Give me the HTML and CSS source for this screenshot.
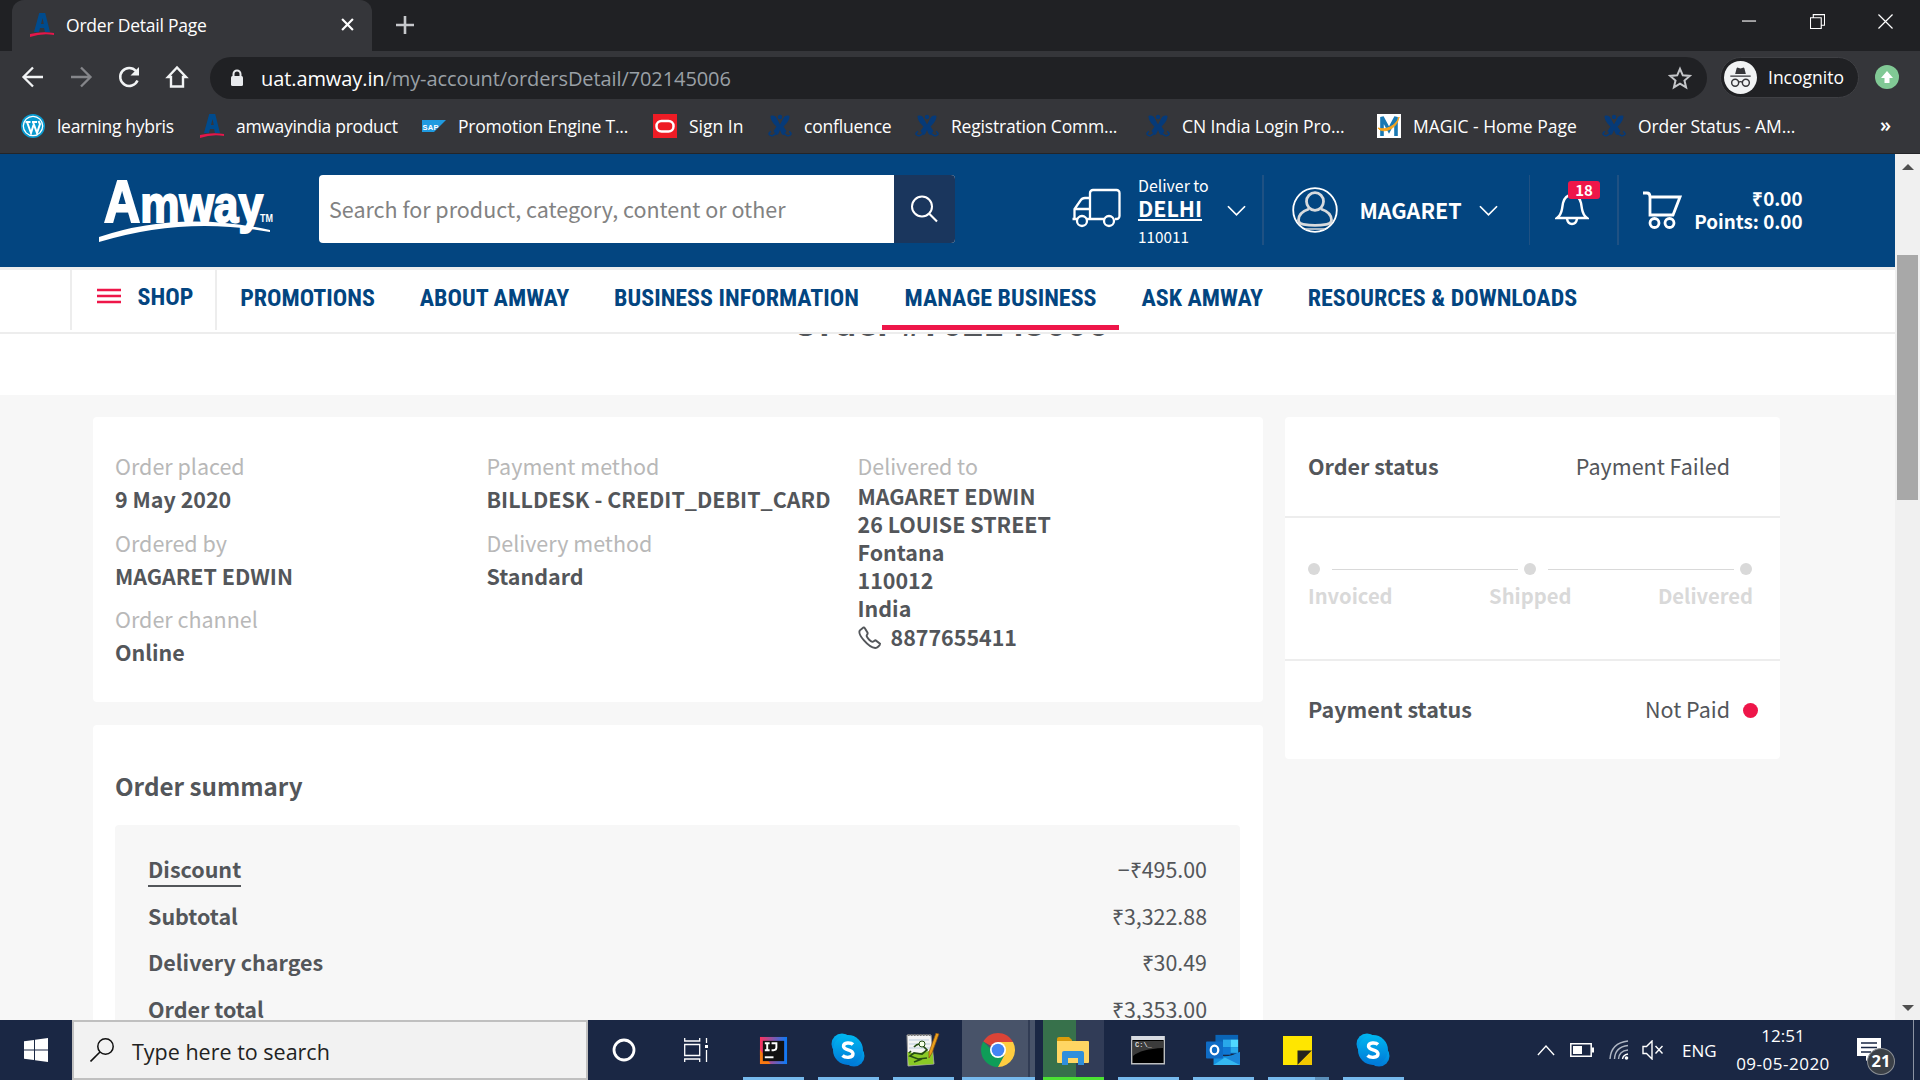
FILE: index.html
```html
<!DOCTYPE html>
<html lang="en">
<head>
<meta charset="utf-8">
<title>Order Detail Page</title>
<link rel="stylesheet" href="styles.css">
</head>
<body>
<svg class="defs" width="0" height="0">
  <symbol id="amway-a" viewBox="0 0 24 24"><path fill="#004b8d" fill-rule="evenodd" d="M4 19 9.2 0h6L20 19h-5l-1-4h-4l-1 4zM11 11h2.800l-1.300-6z"/><path fill="#e4174b" d="M0 21q12-3 24-1v2Q12 20 0 24z"/></symbol>
  <symbol id="conf" viewBox="0 0 24 24"><path fill="#063a78" d="M2.500 2c3-1 5 0 6 2l3.500 6.500L15.500 4c1-2 3-3 6-2 0 4-3 8-6 10.500l3 4.500-3 4c-2 0-2.500-3-3.500-5-1 2-1.500 5-3.500 5l-3-4 3-4.500C5.500 10 2.500 6 2.500 2z"/><path d="M3 17.500c-4 2-1 5 2 4l3-2M21 17.500c4 2 1 5-2 4l-3-2" fill="none" stroke="#063a78" stroke-width="1.600"/><circle cx="12" cy="3" r="2.200" fill="#063a78"/></symbol>
  <symbol id="chev" viewBox="0 0 20 14"><path d="m1 2 9 9 9-9" fill="none" stroke="currentColor" stroke-width="1.800"/></symbol>
  <linearGradient id="sky" x2="0" y2="1"><stop stop-color="#00b7f0"/><stop offset="1" stop-color="#0078d7"/></linearGradient>
  <symbol id="skype" viewBox="0 0 34 34"><g fill="url(#sky)"><circle cx="11" cy="11" r="10.500"/><circle cx="23" cy="23" r="10.500"/><circle cx="17" cy="17" r="15"/></g><path d="M22 11.500C20 9.500 12.500 9 12.500 13.300c0 4.300 9.500 2.700 9.500 7.500 0 4.600-8 4.200-10.500 1.700" fill="none" stroke="#fff" stroke-width="3.400"/></symbol>
</svg>

<header class="browser">
  <div class="tabstrip">
    <div class="tab"><svg class="ic24"><use href="#amway-a"/></svg><span>Order Detail Page</span>
      <svg class="tab-x" viewBox="0 0 12 12"><path d="m1 1 10 10M11 1 1 11" stroke="#fff" stroke-width="2"/></svg></div>
    <svg class="plus" viewBox="0 0 18 18"><path d="M9 0v18M0 9h18" stroke="#c6c8cb" stroke-width="2.600"/></svg>
    <div class="winbtns">
      <svg viewBox="0 0 16 16"><path d="M0 7.500h15" stroke="#fff" stroke-width="1.200"/></svg>
      <svg viewBox="0 0 16 16"><path d="M.5 4h11.500v11.500H.5zM3.500 4V.6h12V12H12" fill="none" stroke="#fff" stroke-width="1.200"/></svg>
      <svg viewBox="0 0 16 16"><path d="m.5.5 15 15m0-15-15 15" stroke="#fff" stroke-width="1.300"/></svg>
    </div>
  </div>
  <div class="toolbar">
    <svg class="nav-ic" viewBox="0 0 24 24"><path d="M22 12H3m9-9.500L2.500 12l9.500 9.500" fill="none" stroke="#f1f3f4" stroke-width="2.300"/></svg>
    <svg class="nav-ic" viewBox="0 0 24 24"><path d="M2 12h19m-9-9.500 9.500 9.500-9.500 9.500" fill="none" stroke="#85868a" stroke-width="2.300"/></svg>
    <svg class="nav-ic" viewBox="0 0 24 24"><path d="M20.500 15.500A9 9 0 1 1 19 6" fill="none" stroke="#f1f3f4" stroke-width="2.500"/><path d="M22 2v8.500h-8.500z" fill="#f1f3f4"/></svg>
    <svg class="nav-ic" viewBox="0 0 24 24"><path d="M6 21.500V12H3l9-9.500 9 9.500h-3v9.500z" fill="none" stroke="#f1f3f4" stroke-width="2.400"/></svg>
    <div class="omnibox">
      <svg class="lock" viewBox="0 0 14 18"><path d="M3.500 8V5a3.500 3.500 0 0 1 7 0v3" fill="none" stroke="#e8eaed" stroke-width="2"/><rect x="1" y="7" width="12" height="10" rx="1.500" fill="#e8eaed"/></svg>
      <span class="url"><b>uat.amway.in</b>/my-account/ordersDetail/702145006</span>
      <svg class="star" viewBox="0 0 24 24"><path d="m12 2.800 2.800 6.500 7 .6-5.300 4.600 1.600 6.900-6.100-3.700-6.100 3.700 1.600-6.900L2.200 9.900l7-.6z" fill="none" stroke="#c4c6c9" stroke-width="2"/></svg>
    </div>
    <div class="incog">
      <svg viewBox="0 0 34 34"><circle cx="17" cy="17" r="17" fill="#f1f3f4"/><path d="M11.500 13.500 13 7.500q.5-1 1.500-.6l2.500.7 2.500-.7q1-.3 1.500.6l1.500 6z" fill="#35363a"/><path d="M6.500 15.600h21M14.500 22q2.500-1.500 5 0" stroke="#35363a" stroke-width="1.500" fill="none"/><g fill="none" stroke="#35363a" stroke-width="1.500"><circle cx="11.500" cy="22.500" r="3.600"/><circle cx="22.500" cy="22.500" r="3.600"/></g></svg>
      <span>Incognito</span>
    </div>
    <svg class="upd" viewBox="0 0 24 24"><circle cx="12" cy="12" r="12" fill="#81c995"/><path d="m12 6 6 7h-3.500v5h-5v-5H6z" fill="#fff"/></svg>
  </div>
  <div class="bookmarks">
    <div class="bm b1"><svg class="ic24" viewBox="0 0 24 24"><circle cx="12" cy="12" r="12" fill="#0a9bd0"/><circle cx="12" cy="12" r="9.700" fill="none" stroke="#fff" stroke-width="1.300"/><path d="M4.500 8h5M6 8l4 11 2.500-8M11 8h5m-4 0 4 11 3-9-1.500-3" fill="none" stroke="#fff" stroke-width="2"/></svg><span>learning hybris</span></div>
    <div class="bm b2"><svg class="ic24"><use href="#amway-a"/></svg><span>amwayindia product</span></div>
    <div class="bm b3"><svg class="ic24" viewBox="0 0 24 24"><path d="M0 6h24L12 18H0z" fill="#1f9ae0"/><text x=".5" y="15.500" class="sap" textLength="16">SAP</text></svg><span>Promotion Engine T...</span></div>
    <div class="bm b4"><svg class="ic24" viewBox="0 0 24 24"><path d="M0 0h24v24H0z" fill="#ee1c25"/><rect x="3.500" y="7" width="17" height="10.500" rx="5" fill="none" stroke="#fff" stroke-width="2.500"/></svg><span>Sign In</span></div>
    <div class="bm b5"><svg class="ic24"><use href="#conf"/></svg><span>confluence</span></div>
    <div class="bm b6"><svg class="ic24"><use href="#conf"/></svg><span>Registration Comm...</span></div>
    <div class="bm b7"><svg class="ic24"><use href="#conf"/></svg><span>CN India Login Pro...</span></div>
    <div class="bm b8"><svg class="ic24" viewBox="0 0 24 24"><path d="M0 0h24v24H0z" fill="#fff"/><path d="M5 22V3l7 13 7-13v19" fill="none" stroke="#1a79b3" stroke-width="3.600"/><path d="M1 14c4 6 19 2 21-11-2 8-13 14-21 11z" fill="#f9a51b" stroke="#f9a51b"/></svg><span>MAGIC - Home Page</span></div>
    <div class="bm b9"><svg class="ic24"><use href="#conf"/></svg><span>Order Status - AM...</span></div>
    <span class="more">»</span>
  </div>
</header>

<div class="viewport">
  <div class="page">
    <div class="masthead">
      <svg class="logo" viewBox="0 0 176 66"><g fill="#fff"><text class="logo-t" x="5" y="45" textLength="159" lengthAdjust="spacingAndGlyphs"><tspan class="logo-a">A</tspan>mway</text><text class="logo-tm" x="161" y="45" textLength="13" lengthAdjust="spacingAndGlyphs">TM</text><path d="M0 60Q80 33 171 53v2Q85 39 0 65z"/></g></svg>
      <div class="search"><span>Search for product, category, content or other</span>
        <i><svg viewBox="0 0 28 28"><circle cx="12" cy="11.500" r="10" fill="none" stroke="#fff" stroke-width="2"/><path d="m19 18.500 8 8" stroke="#fff" stroke-width="2.200"/></svg></i></div>
      <svg class="truck" viewBox="0 0 50 40"><g fill="none" stroke="#fff" stroke-width="2.300"><path d="M7 31H1.500M15 31h18m11 0h1.500a3 3 0 0 0 3-3V5a3 3 0 0 0-3-3H22a3 3 0 0 0-3 3v26M3.500 31V21l6-8.500q1.500-2.500 4.500-2.500h5M4 21h15"/><circle cx="11" cy="33" r="5"/><circle cx="38" cy="33" r="5"/></g></svg>
      <div class="deliver"><span>Deliver to</span><b>DELHI</b><small>110011</small></div>
      <svg class="chev"><use href="#chev"/></svg>
      <i class="rule r1"></i>
      <svg class="avatar" viewBox="0 0 46 46"><circle cx="23" cy="23" r="21.800" fill="none" stroke="#fff" stroke-width="1.800"/><g fill="none" stroke="#d8dadd" stroke-width="2.800"><ellipse cx="23" cy="14.500" rx="8.500" ry="8.800"/><path d="M17 22c-6 2-10.500 6-10.500 11 0 3 3 4 5 4.300 7 1.200 16 1.200 23 0 2-.3 5-1.300 5-4.300 0-5-4.500-9-10.500-11"/><path d="M13 42h20" stroke-width="1.500"/></g></svg>
      <b class="user">MAGARET</b>
      <svg class="chev c2"><use href="#chev"/></svg>
      <i class="rule r2"></i>
      <div class="bell"><svg viewBox="0 0 34 34"><path d="M2 26h30q-4-3-5-9l-1-6q-2-8-9-8t-9 8l-1 6q-1 6-5 9zM12 27q1 5 5 5t5-5" fill="none" stroke="#fff" stroke-width="2.400"/></svg><em>18</em></div>
      <i class="rule r3"></i>
      <svg class="cart" viewBox="0 0 40 38"><g fill="none" stroke="#fff" stroke-width="2.800"><path d="M1 2h4q3 0 3 4v18h23l7-18H8"/><circle cx="12.500" cy="32" r="4.500"/><circle cx="27.500" cy="32" r="4.500"/></g></svg>
      <div class="points"><b>₹0.00</b><b>Points: 0.00</b></div>
    </div>
    <nav class="menu">
      <a class="shop"><svg viewBox="0 0 24 18"><path d="M0 3h24M0 9h24M0 15h24" stroke="#ee1649" stroke-width="2.400"/></svg><span>SHOP</span></a>
      <a class="m1"><span>PROMOTIONS</span></a><a class="m2"><span>ABOUT AMWAY</span></a><a class="m3"><span>BUSINESS INFORMATION</span></a><a class="m4 on"><span>MANAGE BUSINESS</span></a><a class="m5"><span>ASK AMWAY</span></a><a class="m6"><span>RESOURCES &amp; DOWNLOADS</span></a>
    </nav>
    <div class="title"><h1>Order #702145006</h1></div>
    <main class="content">
      <div class="main-col">
        <section class="card details">
          <dl><dt>Order placed</dt><dd>9 May 2020</dd><dt>Ordered by</dt><dd>MAGARET EDWIN</dd><dt>Order channel</dt><dd>Online</dd></dl>
          <dl><dt>Payment method</dt><dd>BILLDESK - CREDIT_DEBIT_CARD</dd><dt>Delivery method</dt><dd>Standard</dd></dl>
          <div class="addr"><p class="lbl">Delivered to</p><p>MAGARET EDWIN</p><p>26 LOUISE STREET</p><p>Fontana</p><p>110012</p><p>India</p>
            <p class="tel"><svg viewBox="0 0 24 24"><path d="M5 1.500 2 4c-3 4 9 18 16 18.500 2 .2 5-3 5-4.500l-4.500-3.500c-1-.6-2 1.500-3.500 1.500-2-.5-5.500-4-6-6 0-1.500 1.500-2 1-3.500L7 1.500c-.5-1-1.500-.6-2 0z" fill="none" stroke="#53565a" stroke-width="2"/></svg>8877655411</p></div>
        </section>
        <section class="card summary">
          <h2>Order summary</h2>
          <div class="totals">
            <div><b class="u">Discount</b><span>−₹495.00</span></div>
            <div><b>Subtotal</b><span>₹3,322.88</span></div>
            <div><b>Delivery charges</b><span>₹30.49</span></div>
            <div><b>Order total</b><span>₹3,353.00</span></div>
          </div>
        </section>
      </div>
      <aside class="card status">
        <div class="row"><b>Order status</b><span>Payment Failed</span></div>
        <div class="steps">
          <div class="track"><i></i><hr><i></i><hr><i></i></div>
          <div class="names"><b>Invoiced</b><b>Shipped</b><b>Delivered</b></div>
        </div>
        <div class="row pay"><b>Payment status</b><span>Not Paid</span><i></i></div>
      </aside>
    </main>
  </div>
  <div class="scroll"><i class="up"></i><i class="thumb"></i><i class="down"></i></div>
</div>

<footer class="taskbar">
  <div class="start"><svg viewBox="0 0 24 24"><path fill="#fff" d="M0 3.300 10 2v9.500H0zM11 1.800 24 0v11.500H11zM0 12.500h10V22L0 20.700zm11 0h13V24l-13-1.800z"/></svg></div>
  <div class="tsearch"><svg viewBox="0 0 24 24"><circle cx="15.500" cy="8.500" r="7.700" fill="none" stroke="#111" stroke-width="1.500"/><path d="M10 14 .5 23.500" stroke="#111" stroke-width="1.600"/></svg><span>Type here to search</span></div>
  <div class="slot s1"><svg viewBox="0 0 24 24"><circle cx="12" cy="12" r="10" fill="none" stroke="#fff" stroke-width="2.800"/></svg></div>
  <div class="slot s2"><svg viewBox="0 0 24 24"><g fill="none" stroke="#fff" stroke-width="1.300"><path d="M.7 6.500h15v11H.7zM.7 0v3h15V0M.7 24v-3h15v3M22.500 0v5M22.500 12v12"/></g><path d="M21 7h3v3h-3z" fill="#fff"/></svg></div>
  <div class="slot app s3"><svg viewBox="0 0 30 30"><linearGradient id="ij"><stop stop-color="#fe315d"/><stop offset="1" stop-color="#087cfa"/></linearGradient><path d="M1 1h28v28H1z" fill="url(#ij)"/><path d="M1 14v15h11z" fill="#f97a12"/><path d="M4 5h22v21H4z" fill="#111"/><path d="M6 7.500h5M8.500 7.500v7M6 14.700h5M13 7.500h5v4.500q0 2.700-3 2.700h-2" fill="none" stroke="#fff" stroke-width="2"/><path d="M6 21h9v2H6z" fill="#fff"/></svg></div>
  <div class="slot app s4"><svg class="big"><use href="#skype"/></svg></div>
  <div class="slot app s5"><svg class="big" viewBox="0 0 34 34"><path d="M1 2h24l3 29-26 2z" fill="#f4f4f4" stroke="#999"/><path d="M1.500 19q10 3 25-2l1 14-25 1.500z" fill="#8ac926"/><path d="M3 7h20M3 11h21M3 15h21" stroke="#bcd" /><path d="M2 2h23" stroke="#777" stroke-width="2" stroke-dasharray="1.500 1.500"/><path d="M8 14q5-5 9-1l4 4-5 4-8-1-4 3 8 3 9-1M5 18l-2 2M16 26l-8 3" fill="none" stroke="#254d13" stroke-width="1.700"/><circle cx="16" cy="11" r="3" fill="#f5ffe8" stroke="#254d13"/><path d="m33 1-7 19-3 5 0-6 7-19z" fill="#e9a01b" stroke="#884d15" stroke-width=".7"/></svg></div>
  <div class="slot app s6"><svg class="big" viewBox="0 0 34 34"><path d="M17 17 2.300 8.500a17 17 0 0 1 29.400 0z" fill="#db4437"/><path d="M17 17h-6l-8.700-8.500A17 17 0 0 0 17 34l6-11z" fill="#0f9d58"/><path d="M17 17V9h15a17 17 0 0 1-15 25l6.500-12z" fill="#ffcd40"/><path d="M17 9h15l-.3-.5H8z" fill="#db4437"/><circle cx="17" cy="17" r="8" fill="#fff"/><circle cx="17" cy="17" r="6.300" fill="#4285f4"/></svg></div>
  <div class="slot app s7"><svg class="big" viewBox="0 0 34 34"><path d="M1 6q0-2 2-2h10l3 3v4H1z" fill="#d99b0b"/><path d="M1 8h31q1 0 1 1v20q0 1-1 1H2q-1 0-1-1z" fill="#ffd663"/><path d="M6 32V20q0-2 2-2h18q2 0 2 2v12h-6v-7H12v7z" fill="#2f8fdc"/></svg></div>
  <div class="slot app s8"><svg class="big" viewBox="0 0 34 34"><path d="M.7 3.700h32.600v27H.7z" fill="#000" stroke="#bcbec0" stroke-width="1.400"/><path d="M1 3h32v4H1z" fill="#d7dbe2"/><path d="M2 8h30v7Q10 16 2 23z" fill="#3b3b3b"/><text x="4" y="14" class="cmd">C:\_</text></svg></div>
  <div class="slot app s9"><svg class="big" viewBox="0 0 36 34"><path d="M10 1h24v20H10z" fill="#0a64b6"/><path d="M18 6h8v8h-8z" fill="#28a8ea"/><path d="M26 6h8v8h-8z" fill="#50d9ff"/><path d="M18 14h8v8h-8z" fill="#0f78d4"/><path d="M26 14h8v6h-8z" fill="#28a8ea"/><path d="M8 19q10 9 28 0v14H8z" fill="#1490df"/><path d="M36 19 8 33h28z" fill="#1a86d9"/><path d="M20 25 36 33H8z" fill="#35b8f1"/><rect y="8" width="18" height="18" rx="1" fill="#0f6cc5"/><ellipse cx="9" cy="17" rx="4" ry="4.600" fill="none" stroke="#fff" stroke-width="2.400"/></svg></div>
  <div class="slot app s10"><svg viewBox="0 0 28 28"><path d="M0 0h28v28H0z" fill="#ffe600"/><path d="M14 28V14h14z" fill="#25241f"/><path d="M14 28 28 14v14z" fill="#f2c800"/></svg></div>
  <div class="slot app s11"><svg class="big"><use href="#skype"/></svg></div>
  <div class="tray">
    <svg class="t1" viewBox="0 0 20 12"><path d="m1 11 9-10 9 10" fill="none" stroke="#fff" stroke-width="1.500"/></svg>
    <svg class="t2" viewBox="0 0 24 14"><path d="M.8.800h20.400v12.400H.8z" fill="none" stroke="#fff" stroke-width="1.500"/><path d="M3 3h9v8H3zM22 4.500h2v5h-2z" fill="#fff"/></svg>
    <svg class="t3" viewBox="0 0 20 20"><g fill="none" stroke="#aeb5c2" stroke-width="1.400"><path d="M1 19Q2 3 19 1M5.500 19Q6 7 19 5.500M9.500 19q.5-8 9.500-9"/><path d="M13.500 19q.5-4 5.500-5" stroke="#fff"/></g><circle cx="17.500" cy="18" r="1.800" fill="#fff"/></svg>
    <svg class="t4" viewBox="0 0 22 20"><path d="M1 6.500h3.500L10 1v18l-5.500-5.500H1zM13.500 6l7 7.500m0-7.500-7 7.500" fill="none" stroke="#fff" stroke-width="1.400"/></svg>
    <span class="eng">ENG</span>
    <div class="clock"><span>12:51</span><span class="date">09-05-2020</span></div>
    <div class="note"><svg viewBox="0 0 24 24"><path d="M0 0h24v18h-9l-6 5v-5H0z" fill="#fff"/><path d="M4 5h16M4 9.500h16M4 14h10" stroke="#1a2744" stroke-width="1.400"/></svg><em>21</em></div>
    <i class="peek"></i>
  </div>
</footer>
</body>
</html>
```
FILE: styles.css
```css
* { box-sizing: border-box; }
body { margin: 0; width: 1920px; height: 1080px; overflow: hidden; display: flex; flex-direction: column; font-family: "Noto Sans CJK SC", sans-serif; color: #53565a; }
svg { display: block; flex: none; }
.defs { position: absolute; }
p, h1, h2, dl, dd { margin: 0; }
i, em { font-style: normal; display: block; }
span, b { white-space: nowrap; }

/* browser chrome */
.browser { height: 154px; flex: none; background: #35363a; border-bottom: 1px solid #242528; font-family: "Open Sans", sans-serif; font-stretch: 92%; color: #fff; }
.ic24 { width: 24px; height: 24px; }
.tabstrip { height: 51px; background: #202124; display: flex; align-items: center; padding-left: 12px; }
.tab { width: 360px; height: 51px; background: #35363a; border-radius: 12px 12px 0 0; display: flex; align-items: center; padding: 0 0 2px 18px; font-size: 17.5px; letter-spacing: -.22px; }
.tab span { margin-left: 12px; width: 275px; }
.tab-x { width: 13px; height: 13px; }
.plus { width: 18px; height: 18px; margin: -2px 0 0 24px; }
.winbtns { margin-left: auto; display: flex; gap: 53px; padding: 0 27px 8px 0; }
.winbtns svg { width: 15px; height: 15px; }
.toolbar { height: 52px; display: flex; align-items: center; padding-left: 21px; }
.nav-ic { width: 24px; height: 24px; margin-right: 24px; }
.omnibox { width: 1497px; height: 42px; border-radius: 21px; background: #202124; margin: 2px 0 0 -3px; display: flex; align-items: center; padding: 0 15px 0 20px; }
.lock { width: 14px; height: 18px; }
.url { margin-left: 17px; font-size: 20px; letter-spacing: -.09px; color: #9aa0a6; flex: 1; }
.url b { font-weight: 400; color: #fff; }
.star { width: 24px; height: 24px; }
.incog { width: 139px; height: 41px; border: 1.5px solid #3f4044; border-radius: 21px; background: #202124; margin-left: 13px; display: flex; align-items: center; font-size: 17.5px; padding-left: 3px; }
.incog svg { width: 33px; height: 33px; }
.incog span { margin-left: 11px; }
.upd { width: 24px; height: 24px; margin-left: 16px; }
.bookmarks { display: flex; height: 46px; align-items: center; padding: 0 0 1px 21px; font-size: 17.5px; letter-spacing: -.2px; }
.bm { display: flex; align-items: center; gap: 12px; }
.b1 { width: 179px; letter-spacing: -.3px; } .b2 { width: 222px; letter-spacing: -.3px; } .b3 { width: 231px; } .b4 { width: 115px; letter-spacing: 0; } .b5 { width: 147px; }
.b6 { width: 231px; } .b7 { width: 231px; letter-spacing: -.1px; } .b8 { width: 225px; letter-spacing: 0; } .b9 { width: 278px; letter-spacing: -.1px; }
.sap { font: bold 7.5px "Liberation Sans", sans-serif; fill: #fff; letter-spacing: 0; }
.more { font-size: 20px; font-weight: 600; margin-top: -2px; }

/* page */
.viewport { height: 866px; flex: none; display: flex; overflow: hidden; }
.page { width: 1895px; background: #f7f7f7; }
.masthead { height: 113px; background: #034580; display: flex; align-items: center; padding-left: 99px; color: #fff; }
.logo { width: 176px; height: 66px; margin-top: -2px; overflow: visible; }
.logo-t { font: bold 52px/1 "Liberation Sans", sans-serif; stroke: #fff; stroke-width: 2px; }
.logo-a { font-size: 59px; }
.logo-tm { font: bold 10px/1 "Liberation Sans", sans-serif; }
.search { width: 636px; height: 68px; margin: -3px 0 0 44px; background: #fff; border-radius: 4px; display: flex; align-items: center; overflow: hidden; color: #828282; font-size: 21.5px; }
.search span { padding: 0 0 2px 10px; width: 575px; }
.search i { width: 61px; height: 68px; background: #1a365d; display: grid; place-items: center; padding-right: 2px; }
.search svg { width: 28px; height: 28px; }
.truck { width: 50px; height: 40px; margin: -5px 0 0 116px; }
.deliver { width: 89px; margin-left: 17px; display: flex; flex-direction: column; align-items: flex-start; font-size: 15.9px; line-height: 20px; }
.deliver b { font-size: 21.4px; line-height: 22px; border-bottom: 2px solid #fff; margin: 1px 0 5px; }
.deliver small { font-size: 15.3px; }
.chev { width: 19px; height: 14px; }
.rule { width: 1.5px; height: 70px; background: #1f5183; margin-top: -2px; }
.r1 { margin-left: 16px; }
.avatar { width: 46px; height: 46px; margin: -2px 0 0 28px; }
.user { width: 119px; margin: -3px 0 0 22px; font-size: 21.5px; }
.r2 { margin-left: 31px; }
.bell { position: relative; margin-left: 25px; }
.bell svg { width: 34px; height: 34px; margin-top: -3px; }
.bell em { position: absolute; left: 13px; top: -14px; width: 32px; height: 18px; border-radius: 3px; background: #ee1649; font-size: 15px; line-height: 17px; font-weight: 700; text-align: center; }
.r3 { margin-left: 28px; }
.cart { width: 40px; height: 38px; margin: -1px 0 0 23px; }
.points { width: 121px; text-align: right; font-size: 18.8px; line-height: 23px; display: flex; flex-direction: column; padding-bottom: 3px; }
.menu { height: 67px; border-top: 3px solid #ededed; border-bottom: 2px solid #ededed; background: #fff; padding-left: 70px; display: flex; font: bold 24px Roboto, sans-serif; font-stretch: 75%; color: #034580; position: relative; }
.menu a { height: 60px; display: flex; align-items: center; justify-content: center; padding-bottom: 4px; }
.menu .shop { width: 147px; border: solid #ededed; border-width: 0 2px; padding-bottom: 6px; justify-content: flex-start; padding-left: 25px; }
.shop svg { width: 24px; height: 18px; margin: -2px 16.5px 0 0; }
.m1 { width: 181px; } .m2 { width: 193px; } .m3 { width: 291px; } .m4 { width: 237px; } .m5 { width: 166.5px; } .m6 { width: 314px; }
.menu .on { border-bottom: 5px solid #ee1649; padding-bottom: 0; }
.title { height: 61px; background: #fff; display: flex; justify-content: center; }
.title h1 { font-size: 35.2px; line-height: 40px; margin: -33px 0 0 5px; }
.content { padding: 22px 0 0 93px; display: flex; gap: 22px; align-items: flex-start; font-size: 21.5px; }
.card { background: #fff; border-radius: 4px; }
.main-col { width: 1170px; display: flex; flex-direction: column; gap: 23px; }
.details { height: 285px; padding: 32px 22px; display: grid; grid-template-columns: 371.5px 371px 1fr; }
.details dl { line-height: 33px; }
.details dt { color: #b8b8b8; }
.details dd { font-weight: 700; margin-bottom: 10.5px; white-space: nowrap; font-size: 21.45px; }
.addr { line-height: 28px; font-weight: 700; font-size: 21.45px; }
.addr .lbl { color: #b8b8b8; font-weight: 400; line-height: 33px; }
.tel { display: flex; align-items: center; gap: 10px; }
.tel svg { width: 23px; height: 26px; margin-top: 3px; }
.summary { height: 420px; padding: 40px 22px; }
.summary h2 { font-size: 24.2px; line-height: 41px; }
.totals { margin-top: 19px; background: #f7f7f7; border-radius: 4px; padding: 21px 33px; height: 300px; width: 1125px; }
.totals div { height: 46.6px; display: flex; justify-content: space-between; align-items: center; line-height: 30px; }
.totals span { font-size: 21.4px; }
.totals .u { border-bottom: 2px solid #53565a; margin-top: 2px; line-height: 29px; padding-bottom: 2px; }
.status { width: 495px; height: 342px; }
.row { height: 101px; border-bottom: 2px solid #ededed; display: flex; align-items: center; padding: 0 50px 2px 23px; }
.row span { margin-left: auto; }
.steps { height: 143px; border-bottom: 2px solid #ededed; padding: 45px 28px 0 23px; color: #d9d9d9; }
.track { display: flex; align-items: center; }
.track i { width: 12px; height: 12px; border-radius: 50%; background: #d9d9d9; }
.track hr { flex: 1; border: 0; height: 1px; background: #d9d9d9; margin: 0 6px 0 12px; }
.names { display: flex; justify-content: space-between; font-size: 20.2px; line-height: 30px; margin: 6px -1px 0 0; }
.names b:nth-child(2) { padding-left: 10px; }
.pay { border: 0; height: 98px; padding: 0 22px 3px 23px; }
.pay i { width: 15px; height: 15px; border-radius: 50%; background: #ee1649; margin: 3px 0 0 13px; }
.scroll { width: 25px; background: #f0f0f0; display: flex; flex-direction: column; align-items: center; }
.up { margin-top: 10px; border: 6px solid transparent; border-top: 0; border-bottom-color: #505050; }
.thumb { width: 21px; height: 245px; background: #a8a8a8; margin-top: 85px; }
.down { margin: auto 0 9px; border: 6px solid transparent; border-bottom: 0; border-top-color: #505050; }

/* taskbar */
.taskbar { height: 60px; flex: none; background: #1a2744; display: flex; font-family: "Open Sans", sans-serif; font-stretch: 92%; color: #fff; }
.start { width: 72px; display: grid; place-items: center; }
.start svg { width: 24px; height: 24px; }
.tsearch { width: 516px; background: #f2f2f2; border: 2px solid #c0c0c0; color: #222; display: flex; align-items: center; padding-left: 16px; font-size: 21.5px; }
.tsearch svg { width: 24px; height: 24px; margin-right: 18px; }
.tsearch span { padding-top: 3px; }
.slot { display: grid; place-items: center; }
.slot svg { width: 24px; height: 24px; }
.app { width: 61px; border-bottom: 3px solid #76b9ed; margin-left: 14px; padding: 3px 2px 0 0; }
.app svg { width: 29px; height: 29px; }
.app .big { width: 34px; height: 34px; }
.s1 { width: 72px; } .s2 { width: 72px; }
.s3 { margin-left: 11px; padding-right: 1px; }
.s6 { width: 73px; margin-left: 8px; background: linear-gradient(90deg, #485369 66px, #313c54 66px, #313c54 68px, #485369 68px); }
.s7 { margin-left: 8px; border-color: #4be233; background: linear-gradient(90deg, #37714b 33px, #313c57 33px); }
.s10 { border-image: linear-gradient(90deg, #76b9ed 46px, #5b8fba 46px) 1; border-width: 0 0 3px; }
.cmd { font: bold 7px "Liberation Mono", monospace; fill: #ddd; }
.tray { margin-left: auto; width: 383px; display: flex; align-items: center; font-size: 17px; }
.t1 { width: 18px; height: 11px; }
.t2 { width: 24px; height: 14px; margin-left: 15px; }
.t3 { width: 20px; height: 20px; margin-left: 15px; }
.t4 { width: 22px; height: 20px; margin-left: 13px; }
.eng { margin-left: 18px; width: 36px; }
.clock { width: 104px; margin-left: 13px; display: flex; flex-direction: column; align-items: center; line-height: 28px; }
.date { letter-spacing: .5px; }
.note { position: relative; margin-left: 22px; }
.note svg { width: 24px; height: 24px; }
.note em { position: absolute; left: 10px; top: 10px; width: 28px; height: 27px; border-radius: 50%; background: #3b4047; border: 1px solid #8a8e94; font-size: 16.5px; line-height: 24px; text-align: center; font-weight: 700; }
.peek { width: 1px; height: 60px; background: #8b93a3; margin-left: 32px; }
```
